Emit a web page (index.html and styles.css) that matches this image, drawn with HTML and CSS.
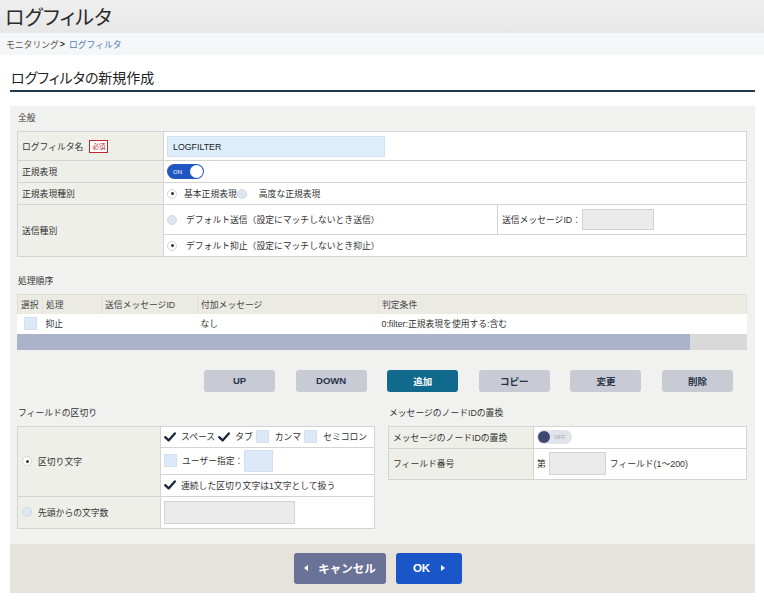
FILE: index.html
```html
<!DOCTYPE html>
<html lang="ja">
<head>
<meta charset="utf-8">
<title>ログフィルタ</title>
<link rel="stylesheet" href="styles.css">
</head>
<body>
<header class="app-header"><h1 class="app-title">ログフィルタ</h1></header>
<nav class="crumbs"><span class="crumb">モニタリング</span><span class="crumb-sep">&gt;</span><a class="crumb-link">ログフィルタ</a></nav>
<main class="content">
  <h2 class="page-title">ログフィルタの新規作成</h2>
  <section class="panel">
    <h3 class="sec-title">全般</h3>
    <table class="form-table general">
      <colgroup><col class="gc1"><col class="gc2"><col></colgroup>
      <tr class="h29">
        <th><span class="lbl">ログフィルタ名</span><span class="req">必須</span></th>
        <td colspan="2"><div class="text-input name-input">LOGFILTER</div></td>
      </tr>
      <tr class="h22">
        <th>正規表現</th>
        <td colspan="2"><span class="toggle on"><span class="toggle-text">ON</span><span class="knob"></span></span></td>
      </tr>
      <tr class="h22">
        <th>正規表現種別</th>
        <td colspan="2"><div class="line"><span class="radio checked"></span><span class="opt">基本正規表現</span><span class="radio r2"></span><span class="opt o2">高度な正規表現</span></div></td>
      </tr>
      <tr class="h30">
        <th rowspan="2">送信種別</th>
        <td><div class="line"><span class="radio"></span><span class="opt o3">デフォルト送信（設定にマッチしないとき送信）</span></div></td>
        <td><div class="line id-line"><span>送信メッセージID：</span><span class="box id-box"></span></div></td>
      </tr>
      <tr class="h22">
        <td colspan="2"><div class="line"><span class="radio checked"></span><span class="opt o3">デフォルト抑止（設定にマッチしないとき抑止）</span></div></td>
      </tr>
    </table>

    <h3 class="sec-title sec-gap">処理順序</h3>
    <div class="list">
      <table class="list-table">
        <colgroup><col class="lc1"><col class="lc2"><col class="lc3"><col class="lc4"><col></colgroup>
        <thead>
          <tr><th>選択</th><th>処理</th><th>送信メッセージID</th><th>付加メッセージ</th><th>判定条件</th></tr>
        </thead>
        <tbody>
          <tr><td><span class="cbox"></span></td><td>抑止</td><td></td><td>なし</td><td>0:filter:正規表現を使用する:含む</td></tr>
        </tbody>
      </table>
      <div class="hscroll"><div class="thumb"></div></div>
    </div>

    <div class="actions">
      <button class="btn">UP</button>
      <button class="btn">DOWN</button>
      <button class="btn primary">追加</button>
      <button class="btn">コピー</button>
      <button class="btn">変更</button>
      <button class="btn">削除</button>
    </div>

    <div class="two-col">
      <div class="col">
        <h3 class="sec-title">フィールドの区切り</h3>
        <table class="form-table delim">
          <colgroup><col class="dc1"><col></colgroup>
          <tr class="h21">
            <th rowspan="3"><div class="line"><span class="radio checked"></span><span class="opt">区切り文字</span></div></th>
            <td><div class="line tight">
              <svg class="check" viewBox="0 0 12 10"><path d="M1.2 5.2 L4.6 8.4 L10.8 1.4"/></svg><span class="copt">スペース</span>
              <svg class="check" viewBox="0 0 12 10"><path d="M1.2 5.2 L4.6 8.4 L10.8 1.4"/></svg><span class="copt">タブ</span>
              <span class="cbox"></span><span class="copt">カンマ</span>
              <span class="cbox"></span><span class="copt">セミコロン</span>
            </div></td>
          </tr>
          <tr class="h27">
            <td><div class="line"><span class="cbox"></span><span class="copt">ユーザー指定：</span><span class="box user-box"></span></div></td>
          </tr>
          <tr class="h22">
            <td><div class="line"><svg class="check" viewBox="0 0 12 10"><path d="M1.2 5.2 L4.6 8.4 L10.8 1.4"/></svg><span class="copt">連続した区切り文字は1文字として扱う</span></div></td>
          </tr>
          <tr class="h32">
            <th><div class="line"><span class="radio"></span><span class="opt">先頭からの文字数</span></div></th>
            <td><span class="box count-box"></span></td>
          </tr>
        </table>
      </div>
      <div class="col">
        <h3 class="sec-title">メッセージのノードIDの置換</h3>
        <table class="form-table node">
          <colgroup><col class="nc1"><col></colgroup>
          <tr class="h22">
            <th>メッセージのノードIDの置換</th>
            <td><span class="toggle off"><span class="knob"></span><span class="toggle-text">OFF</span></span></td>
          </tr>
          <tr class="h31">
            <th>フィールド番号</th>
            <td><div class="line"><span>第</span><span class="box field-box"></span><span>フィールド(1～200)</span></div></td>
          </tr>
        </table>
      </div>
    </div>
  </section>
  <footer class="footer-bar">
    <button class="fbtn cancel"><span class="tri left"></span>キャンセル</button>
    <button class="fbtn ok">OK<span class="tri right"></span></button>
  </footer>
</main>
</body>
</html>
```

FILE: styles.css
```css
* { box-sizing: border-box; }
html, body { margin: 0; padding: 0; background: #fff; }
body {
  font-family: "Liberation Sans", "Noto Sans CJK JP", sans-serif;
  font-size: 8.8px;
  color: #333;
  width: 764px;
}
h1, h2, h3 { margin: 0; font-weight: normal; }

.app-header {
  height: 33px;
  background: linear-gradient(#efefef, #e7e7e7);
  display: flex;
  align-items: center;
  padding-left: 5px;
}
.app-title { font-size: 20px; color: #2a2a2a; letter-spacing: 0.2px; font-feature-settings: "palt"; }

.crumbs {
  height: 22px;
  background: #f5f6f7;
  display: flex;
  align-items: center;
  padding-left: 6px;
  font-size: 8.8px;
}
.crumb { color: #555; }
.crumb-sep { color: #333; font-weight: bold; margin: 0 4px 0 1px; }
.crumb-link { color: #4e7db8; }

.content { padding: 0 9px 0 10px; }
.page-title {
  height: 37px;
  padding: 12px 0 0 1px;
  font-size: 14px;
  color: #222;
  border-bottom: 2px solid #23374f;
  font-feature-settings: "palt";
}

.panel {
  margin-top: 14px;
  background: #f1f1ef;
  padding: 0 8px 15px 7px;
}
.sec-title {
  height: 25px;
  line-height: 25px;
  font-size: 8.8px;
  color: #333;
  padding-left: 1px;
}
.sec-gap { margin-top: 12px; }

/* form tables */
.form-table {
  width: 100%;
  border-collapse: collapse;
  table-layout: fixed;
  background: #fff;
}
.form-table th, .form-table td {
  border: 1px solid #d4d4d2;
  padding: 0 3px;
  text-align: left;
  font-weight: normal;
  vertical-align: middle;
  white-space: nowrap;
}
.form-table th { background: #efefe9; padding-left: 4px; }
.gc1 { width: 146px; }
.gc2 { width: 334px; }
.h21 { height: 21px; }
.h22 { height: 22px; }
.h27 { height: 27px; }
.h29 { height: 29px; }
.h30 { height: 30px; }
.h31 { height: 31px; }
.h32 { height: 32px; }

.lbl { vertical-align: middle; }
.req {
  display: inline-block;
  vertical-align: middle;
  margin-left: 6px;
  border: 1px solid #c3262b;
  color: #c3262b;
  font-size: 6.5px;
  line-height: 11px;
  padding: 0 2px;
  background: #fff;
}

.text-input {
  height: 21px;
  line-height: 21px;
  background: #deedfb;
  border: 1px solid #d2e2f2;
  padding-left: 5px;
  color: #222;
}
.name-input { width: 218px; }

.line { display: flex; align-items: center; }
.opt { margin-left: 7px; }
.o2 { margin-left: 12px; }
.o3 { margin-left: 9px; }
.r2 { margin-left: 0; }

.radio {
  flex: none;
  display: inline-block;
  width: 10px; height: 10px;
  border-radius: 50%;
  background: #dde6f1;
  border: 1px solid #cfd9e6;
  position: relative;
}
.radio.checked { background: #fff; border-color: #d6d6d6; }
.radio.checked::after {
  content: "";
  position: absolute;
  left: 2.5px; top: 2.5px;
  width: 3px; height: 3px;
  border-radius: 50%;
  background: #333;
}

.toggle {
  display: inline-flex;
  align-items: center;
  vertical-align: middle;
  border-radius: 8px;
  position: relative;
}
.toggle.on {
  width: 37px; height: 15px;
  background: #1e56c2;
  padding: 0 1px 0 6px;
  justify-content: space-between;
}
.toggle.on .toggle-text { color: #fff; font-size: 6px; }
.toggle.on .knob { width: 13px; height: 13px; border-radius: 50%; background: #fff; }
.toggle.off {
  width: 35px; height: 14px;
  background: #e1e3ea;
  padding: 0 0 0 1px;
}
.toggle.off .knob { width: 12px; height: 12px; border-radius: 50%; background: #3c4870; }
.toggle.off .toggle-text { color: #a2a6b2; font-size: 5.5px; margin-left: 4px; }

.box {
  display: inline-block;
  background: #ebebeb;
  border: 1px solid #d2d2d2;
}
.id-line { padding-left: 1px; }
.id-box { width: 72px; height: 21px; margin-left: 1px; }

/* list table */
.list { background: #fff; }
.list-table {
  width: 100%;
  border-collapse: collapse;
  table-layout: fixed;
}
.lc1 { width: 25px; }
.lc2 { width: 59px; }
.lc3 { width: 96px; }
.lc4 { width: 181px; }
.list-table th {
  height: 19px;
  background: #ebebe4;
  font-weight: normal;
  text-align: left;
  padding: 0 2px 0 3px;
  color: #444;
  white-space: nowrap;
  border-top: 1px solid #dcdcd6;
  border-right: 1px solid #e2e2dc;
}
.list-table th:first-child { border-left: 1px solid #dcdcd6; }
.list-table td {
  height: 20px;
  padding: 0 3px;
  background: #fff;
  white-space: nowrap;
}
.list-table td:first-child { padding-left: 6px; }
.cbox {
  flex: none;
  display: inline-block;
  vertical-align: middle;
  width: 13px; height: 13px;
  background: #dde9f8;
  border: 1px solid #d3e0f0;
}
.hscroll { height: 16px; background: #d9d9d9; display: flex; }
.thumb { width: 673px; background: #aab3c9; }

/* action buttons */
.actions {
  margin-top: 20px;
  display: flex;
  justify-content: flex-end;
  gap: 20.6px;
  padding-right: 14px;
}
.btn {
  width: 71px;
  height: 22px;
  border: none;
  border-radius: 3px;
  background: #c9cbd4;
  color: #27344c;
  font-family: inherit;
  font-size: 9.5px;
  font-weight: bold;
  padding: 0;
}
.btn.primary { background: #116a8d; color: #fff; }

/* two column lower area */
.two-col {
  margin-top: 9px;
  display: grid;
  grid-template-columns: 358px 359px;
  column-gap: 13px;
}
.dc1 { width: 143px; }
.nc1 { width: 145px; }
.delim th .opt { margin-left: 6px; }
.delim th { padding-left: 4px; }
.check { flex: none; width: 12px; height: 10px; }
.check path { fill: none; stroke: #1b2538; stroke-width: 2.3; stroke-linecap: round; stroke-linejoin: round; }
.delim td { padding-left: 3px; }
.tight .copt { margin: 0 3px 0 5px; }
.tight .cbox + .copt { margin-left: 6px; }
.copt { margin-left: 5px; }
.user-box { width: 29px; height: 22px; margin-left: 1px; background: #dde9f8; border-color: #d3e0f0; }
.count-box { width: 131px; height: 23px; vertical-align: middle; }
.node td { padding-left: 3px; }
.field-box { width: 57px; height: 23px; margin: 0 4px 0 3px; }

/* footer */
.footer-bar {
  height: 49px;
  background: #e6e3dc;
  display: flex;
  justify-content: center;
  align-items: center;
  gap: 10px;
  padding-right: 9px;
}
.fbtn {
  height: 31px;
  border: none;
  border-radius: 3px;
  color: #fff;
  font-family: inherit;
  font-size: 11.5px;
  font-weight: bold;
  display: flex;
  align-items: center;
  justify-content: center;
  padding: 0;
}
.fbtn.cancel { width: 92px; background: #6b7297; }
.fbtn.ok { width: 66px; background: #1b56c9; }
.tri { display: inline-block; width: 0; height: 0; border-top: 3px solid transparent; border-bottom: 3px solid transparent; }
.tri.left { border-right: 4px solid #fff; margin-right: 10px; }
.tri.right { border-left: 4px solid #fff; margin-left: 11px; }
```
